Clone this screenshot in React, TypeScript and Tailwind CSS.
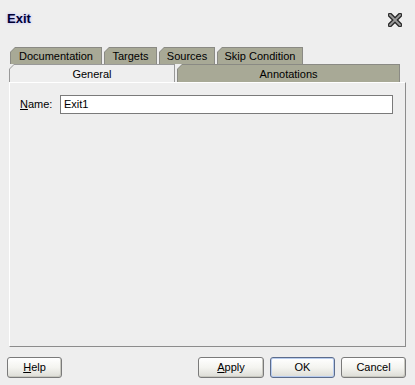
import clsx from 'clsx'

// Tab with a clipped top-left corner, border drawn by an outer layer
function Tab({ label, className, active }: { label: string; className: string; active?: boolean }) {
  return (
    <div
      className={clsx(
        'relative [clip-path:polygon(5px_0,100%_0,100%_100%,0_100%,0_5px)]',
        active ? 'bg-[#999999] z-10' : 'bg-[#8a8a84]',
        className,
      )}
    >
      <div
        className={clsx(
          'absolute top-px left-px right-px bottom-0 flex items-center justify-center [clip-path:polygon(4px_0,100%_0,100%_100%,0_100%,0_4px)]',
          active ? 'bg-[#eeeeee] -bottom-px' : 'bg-[#a8a996]',
        )}
      >
        <span className="text-[11px] text-black leading-none mt-px">{label}</span>
      </div>
    </div>
  )
}

function Button({ children, className, focused }: { children: React.ReactNode; className: string; focused?: boolean }) {
  return (
    <button
      className={clsx(
        'h-[21px] rounded-[3px] border text-[11px] text-black bg-gradient-to-b from-white via-[#f4f4f0] to-[#dcdcd6]',
        focused
          ? 'border-[#5c6c8c] shadow-[inset_0_0_0_1px_#b9cdef]'
          : 'border-[#7a7a7a] shadow-[inset_-1px_-1px_0_#c8c8c0]',
        className,
      )}
    >
      {children}
    </button>
  )
}

export default function App() {
  return (
    <div className="w-[415px] h-[385px] bg-[#eeeeee] flex flex-col font-['Liberation_Sans',Arial,sans-serif] overflow-hidden">
      {/* Title */}
      <div className="h-[37px] flex items-center justify-between pl-[7px] pr-[13px]">
        <span className="text-[13px] font-bold text-[#000033] [text-shadow:0_0_3px_#a8a8ff] mt-px">Exit</span>
        <svg width="14" height="14" viewBox="0 0 14 14" className="mt-[3px]">
          <path d="M2 2 L12 12 M12 2 L2 12" stroke="#2a2a2a" strokeWidth="4.6" strokeLinecap="square" />
          <path d="M2 2 L12 12 M12 2 L2 12" stroke="#9a9a9a" strokeWidth="1.8" strokeLinecap="square" />
        </svg>
      </div>

      {/* Tabs */}
      <div className="mt-[10px] pl-[9px]">
        <div className="flex gap-[2px] pl-px h-[17px]">
          <Tab label="Documentation" className="w-[92px]" />
          <Tab label="Targets" className="w-[53px]" />
          <Tab label="Sources" className="w-[56px]" />
          <Tab label="Skip Condition" className="w-[86px]" />
        </div>
        <div className="flex gap-[2px] h-[18px]">
          <Tab label="General" className="w-[166px]" active />
          <Tab label="Annotations" className="w-[223px]" />
        </div>

        {/* Panel */}
        <div className="w-[397px] h-[265px] border-l border-l-white border-r border-r-[#8c8c8c] border-b border-b-[#8c8c8c] border-t border-t-white">
          <div className="flex items-center pt-[12px] pl-[10px]">
            <span className="text-[11px] text-black w-[40px]">
              <span className="underline">N</span>ame:
            </span>
            <div className="w-[333px] h-[19px] border border-[#7a7a7a] bg-white flex items-center pl-[3px] text-[11px] text-black">
              Exit1
            </div>
          </div>
        </div>
      </div>

      {/* Buttons */}
      <div className="mt-[10px] flex pl-[7px] pr-[9px]">
        <Button className="w-[55px]">
          <span className="underline">H</span>elp
        </Button>
        <div className="flex-1" />
        <div className="flex gap-[6px]">
          <Button className="w-[66px]">
            <span className="underline">A</span>pply
          </Button>
          <Button className="w-[65px]" focused>
            OK
          </Button>
          <Button className="w-[65px]">Cancel</Button>
        </div>
      </div>
    </div>
  )
}
